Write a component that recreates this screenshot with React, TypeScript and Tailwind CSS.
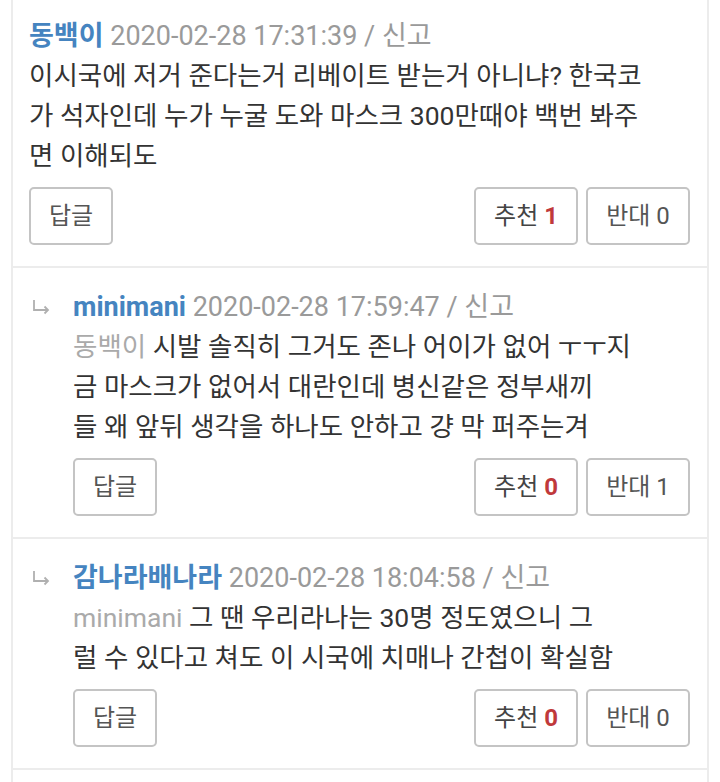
import React from "react";

interface Comment {
  id: number;
  author: string;
  date: string;
  mention?: string;
  lines: string[];
  up: number;
  down: number;
  reply: boolean;
}

const comments: Comment[] = [
  {
    id: 1,
    author: "동백이",
    date: "2020-02-28 17:31:39",
    lines: [
      "이시국에 저거 준다는거 리베이트 받는거 아니냐? 한국코",
      "가 석자인데 누가 누굴 도와 마스크 300만때야 백번 봐주",
      "면 이해되도",
    ],
    up: 1,
    down: 0,
    reply: false,
  },
  {
    id: 2,
    author: "minimani",
    date: "2020-02-28 17:59:47",
    mention: "동백이",
    lines: [
      "시발 솔직히 그거도 존나 어이가 없어 ㅜㅜ지",
      "금 마스크가 없어서 대란인데 병신같은 정부새끼",
      "들 왜 앞뒤 생각을 하나도 안하고 걍 막 퍼주는겨",
    ],
    up: 0,
    down: 1,
    reply: true,
  },
  {
    id: 3,
    author: "감나라배나라",
    date: "2020-02-28 18:04:58",
    mention: "minimani",
    lines: ["그 땐 우리라나는 30명 정도였으니 그", "럴 수 있다고 쳐도 이 시국에 치매나 간첩이 확실함"],
    up: 0,
    down: 0,
    reply: true,
  },
];

const font = { fontFamily: "Roboto, 'Noto Sans CJK KR', sans-serif" };

function ReplyArrow() {
  return (
    <svg className="w-[20px] h-[16px] shrink-0" viewBox="0 0 20 16" fill="none" stroke="#b0b0b0" strokeWidth={1.8}>
      <path d="M2 1 V11 H16" />
      <path d="M12.5 7.5 L16 11 L12.5 14.5" />
    </svg>
  );
}

function CommentItem({ c }: { c: Comment }) {
  return (
    <div
      className={`pb-[21px] pr-[17px] border-b-2 border-[#ececec] ${
        c.reply ? "pl-[19px] pt-[19px]" : "pl-[16px] pt-4"
      }`}
    >
      <div className="flex">
        {c.reply && (
          <div className="w-[41px] h-[40px] flex items-center">
            <ReplyArrow />
          </div>
        )}
        <div className="flex-1">
          <div className="text-[27px] leading-[40px] whitespace-nowrap">
            <span className="font-bold text-[#4584c0]">{c.author}</span>{" "}
            <span className="text-[#9a9a9a]">{c.date} / 신고</span>
          </div>
          <div className="text-[26.5px] leading-[40px] text-[#333]">
            {c.lines.map((line, i) => (
              <div key={i} className="whitespace-nowrap">
                {i === 0 && c.mention && <span className="text-[#aaa]">{c.mention} </span>}
                {line}
              </div>
            ))}
          </div>
        </div>
      </div>
      <div className={`flex items-center justify-between mt-[11px] ${c.reply ? "pl-[41px]" : ""}`}>
        <button className="h-[58px] w-[84px] border-2 border-[#c4c4c4] rounded-[5px] text-[24px] text-[#555] bg-white">
          답글
        </button>
        <div className="flex gap-2">
          <button className="h-[58px] w-[104px] border-2 border-[#c4c4c4] rounded-[5px] text-[24px] text-[#444] bg-white">
            추천 <span className="font-bold text-[#c0393b]">{c.up}</span>
          </button>
          <button className="h-[58px] w-[104px] border-2 border-[#c4c4c4] rounded-[5px] text-[24px] text-[#555] bg-white">
            반대 {c.down}
          </button>
        </div>
      </div>
    </div>
  );
}

export default function App() {
  return (
    <div className="w-[720px] h-[782px] bg-white overflow-hidden" style={font}>
      <div className="mx-[11px] border-x-2 border-[#ececec] h-full">
        {comments.map((c) => (
          <CommentItem key={c.id} c={c} />
        ))}
      </div>
    </div>
  );
}
